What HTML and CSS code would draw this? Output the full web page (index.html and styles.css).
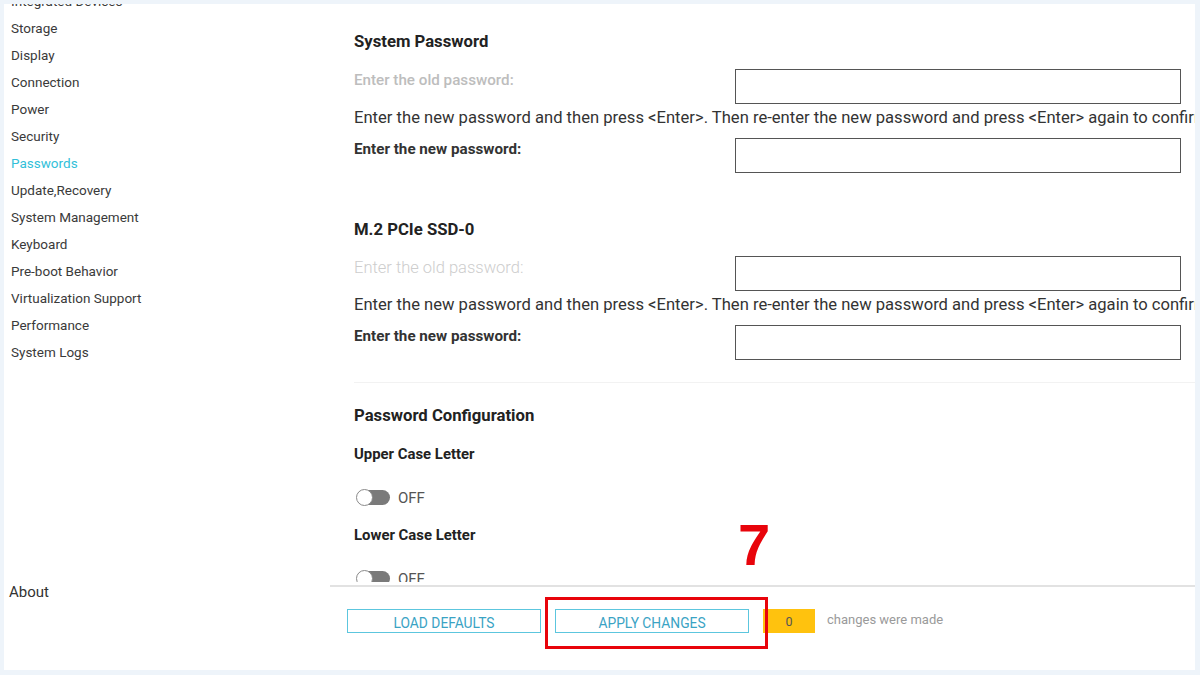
FILE: index.html
```html
<!DOCTYPE html>
<html lang="en">
<head>
<meta charset="utf-8">
<title>Passwords</title>
<link rel="stylesheet" href="styles.css">
</head>
<body>
<div class="app">
  <div class="panel">
    <aside class="sidebar">
      <div class="navwrap">
        <ul class="nav">
          <li>Integrated Devices</li>
          <li>Storage</li>
          <li>Display</li>
          <li>Connection</li>
          <li>Power</li>
          <li>Security</li>
          <li class="active">Passwords</li>
          <li>Update,Recovery</li>
          <li>System Management</li>
          <li>Keyboard</li>
          <li>Pre-boot Behavior</li>
          <li>Virtualization Support</li>
          <li>Performance</li>
          <li>System Logs</li>
        </ul>
      </div>
      <div class="about">About</div>
    </aside>
    <main class="main">
      <div class="scroll">
        <section class="section">
          <h2 class="heading">System Password</h2>
          <div class="row">
            <span class="label label-disabled">Enter the old password:</span>
            <span class="input"></span>
          </div>
          <p class="hint">Enter the new password and then press &lt;Enter&gt;. Then re-enter the new password and press &lt;Enter&gt; again to confirm.</p>
          <div class="row">
            <span class="label">Enter the new password:</span>
            <span class="input"></span>
          </div>
        </section>
        <section class="section section-2">
          <h2 class="heading">M.2 PCIe SSD-0</h2>
          <div class="row">
            <span class="label label-faint">Enter the old password:</span>
            <span class="input"></span>
          </div>
          <p class="hint">Enter the new password and then press &lt;Enter&gt;. Then re-enter the new password and press &lt;Enter&gt; again to confirm.</p>
          <div class="row">
            <span class="label">Enter the new password:</span>
            <span class="input"></span>
          </div>
        </section>
        <div class="divider"></div>
        <section class="config">
          <h2 class="heading">Password Configuration</h2>
          <div class="opt-label">Upper Case Letter</div>
          <div class="toggle-row"><span class="toggle"><span class="knob"></span></span><span class="state">OFF</span></div>
          <div class="opt-label opt-2">Lower Case Letter</div>
          <div class="toggle-row"><span class="toggle"><span class="knob"></span></span><span class="state">OFF</span></div>
        </section>
      </div>
      <footer class="bar">
        <button class="btn">LOAD DEFAULTS</button>
        <button class="btn">APPLY CHANGES</button>
        <span class="count">0</span>
        <span class="changes">changes were made</span>
      </footer>
    </main>
  </div>
  <div class="highlight"></div>
  <div class="step">7</div>
</div>
</body>
</html>
```
FILE: styles.css
```css
* { box-sizing: border-box; }
html, body { margin: 0; padding: 0; }
body {
  width: 1200px;
  height: 675px;
  background: #eef4fa;
  font-family: Roboto, "Liberation Sans", sans-serif;
  color: #333;
  overflow: hidden;
}
.app {
  position: relative;
  width: 1200px;
  height: 675px;
  padding: 4px 5px 5px 4px;
}
.panel {
  display: flex;
  height: 666px;
  background: #fff;
}
.sidebar {
  width: 326px;
  display: flex;
  flex-direction: column;
  flex-shrink: 0;
}
.navwrap {
  flex: 1;
  overflow: hidden;
}
.nav {
  list-style: none;
  margin: -16px 0 0;
  padding: 0 0 0 7px;
}
.nav li {
  height: 27px;
  line-height: 27px;
  font-size: 13.5px;
  color: #3a3a3a;
}
.nav li.active { color: #33bfd9; }
.about {
  height: 88px;
  padding-left: 5px;
  font-size: 15px;
  line-height: 20px;
  color: #333;
}
.main {
  flex: 1;
  display: flex;
  flex-direction: column;
  min-width: 0;
}
.scroll {
  height: 578px;
  margin-bottom: 3px;
  overflow: hidden;
  padding: 28px 0 0 24px;
}
.heading {
  margin: 0;
  font-size: 16.7px;
  line-height: 20px;
  font-weight: 700;
  color: #222;
}
.section .heading { margin-bottom: 17px; }
.section-2 { margin-top: 47px; }
.section-2 .heading { margin-bottom: 16px; }
.row {
  display: flex;
  align-items: flex-start;
  justify-content: space-between;
  padding-right: 14px;
}
.label {
  margin-top: 2px;
  font-size: 15.2px;
  line-height: 18px;
  font-weight: 700;
  color: #333;
}
.label-disabled { color: #bdbdbd; font-weight: 500; }
.label-faint { color: #cdcdcd; font-weight: 300; font-size: 16.5px; margin-top: 3px; }
.input {
  width: 446px;
  height: 35px;
  border: 1px solid #555;
  background: #fff;
}
.hint {
  margin: 4px 0 10px;
  font-size: 16.6px;
  line-height: 20px;
  white-space: nowrap;
  overflow: hidden;
  color: #333;
}
.divider {
  margin-top: 22px;
  height: 1px;
  background: #f2f2f2;
}
.config { padding-top: 23px; }
.config .heading { margin-bottom: 19px; }
.opt-label {
  font-size: 14.9px;
  line-height: 18px;
  font-weight: 700;
  color: #222;
}
.opt-2 { margin-top: 19px; }
.toggle-row {
  margin-top: 24px;
  height: 20px;
  display: flex;
  align-items: center;
  gap: 8px;
  padding-left: 3px;
}
.toggle {
  position: relative;
  width: 33px;
  height: 15px;
  border-radius: 8px;
  background: #7a7a7a;
}
.knob {
  position: absolute;
  left: -1px;
  top: -1px;
  width: 17px;
  height: 17px;
  border-radius: 50%;
  background: #fff;
  border: 1px solid #8a8a8a;
}
.state {
  font-size: 15px;
  color: #555;
  margin-top: 2px;
}
.bar {
  flex: 1;
  border-top: 2px solid #e2e2e2;
  display: flex;
  align-items: flex-start;
  padding: 22px 0 0 17px;
  gap: 14px;
}
.btn {
  width: 194px;
  height: 24px;
  border: 1px solid #5cc6de;
  background: #fff;
  color: #3aa3c4;
  font-family: Roboto, "Liberation Sans", sans-serif;
  font-size: 13.8px;
  padding: 4px 0 0;
  cursor: pointer;
}
.count {
  width: 52px;
  height: 24px;
  background: #ffc20e;
  color: #555;
  font-size: 12.5px;
  display: flex;
  align-items: center;
  justify-content: center;
}
.changes {
  margin-left: -2px;
  font-size: 13px;
  line-height: 22px;
  color: #9a9a9a;
}
.highlight {
  position: absolute;
  left: 545px;
  top: 597px;
  width: 223px;
  height: 52px;
  border: 3px solid #e8040b;
}
.step {
  position: absolute;
  left: 738px;
  top: 516px;
  font-family: "Liberation Sans", Arial, sans-serif;
  font-weight: 700;
  font-size: 58px;
  line-height: 58px;
  color: #e8040b;
}
```
